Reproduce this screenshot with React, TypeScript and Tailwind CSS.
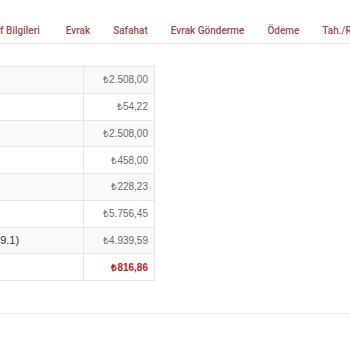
const tabs = ["Taraf Bilgileri", "Evrak", "Safahat", "Evrak Gönderme", "Ödeme", "Tah./Reddiyat"];

const rows = [
  { label: "Asıl Alacak", value: "₺2.508,00" },
  { label: "İşlemiş Faiz", value: "₺54,22" },
  { label: "Takip Tutarı", value: "₺2.508,00" },
  { label: "Masraf", value: "₺458,00" },
  { label: "Vekalet Ücreti", value: "₺228,23" },
  { label: "Toplam", value: "₺5.756,45" },
  { label: "Tahsil Edilen (Madde 9.1)", value: "₺4.939,59" },
  { label: "Kalan", value: "₺816,86", strong: true },
];

export default function App() {
  return (
    <div className="w-[350px] h-[350px] overflow-hidden bg-white font-['Liberation_Sans',Arial,sans-serif]">
      <div className="border-b border-[#e4e4e4] h-[44px] pt-[23px] overflow-hidden">
        <div className="flex items-center -ml-[31px] whitespace-nowrap text-[10px] font-medium font-['Roboto',sans-serif] text-[#9a4b55]">
          {tabs.map((t, i) => (
            <span key={t} className={i === 0 ? "pl-[11.5px] pr-[14.5px]" : "px-[11.5px]"}>
              {t}
            </span>
          ))}
        </div>
      </div>

      <div className="overflow-hidden pt-[22px] h-[269px]">
        <table className="-ml-[114px] border-collapse text-[10px] text-[#6b6b6b]">
          <tbody>
            {rows.map((r, i) => (
              <tr key={r.label} className={i % 2 === 0 ? "bg-[#f9f9f9]" : "bg-white"}>
                <td className="w-[197px] h-[26.75px] px-[8px] border border-[#e6e6e6] text-[11px] text-[#333] whitespace-nowrap">
                  {r.label}
                </td>
                <td
                  className={
                    "w-[71px] h-[26.75px] px-[6px] border border-[#e6e6e6] text-right whitespace-nowrap " +
                    (r.strong ? "font-bold text-[#d01818]" : "")
                  }
                >
                  {r.value}
                </td>
              </tr>
            ))}
          </tbody>
        </table>
      </div>

      <div className="border-t border-[#e6e6e6]" />
    </div>
  );
}
